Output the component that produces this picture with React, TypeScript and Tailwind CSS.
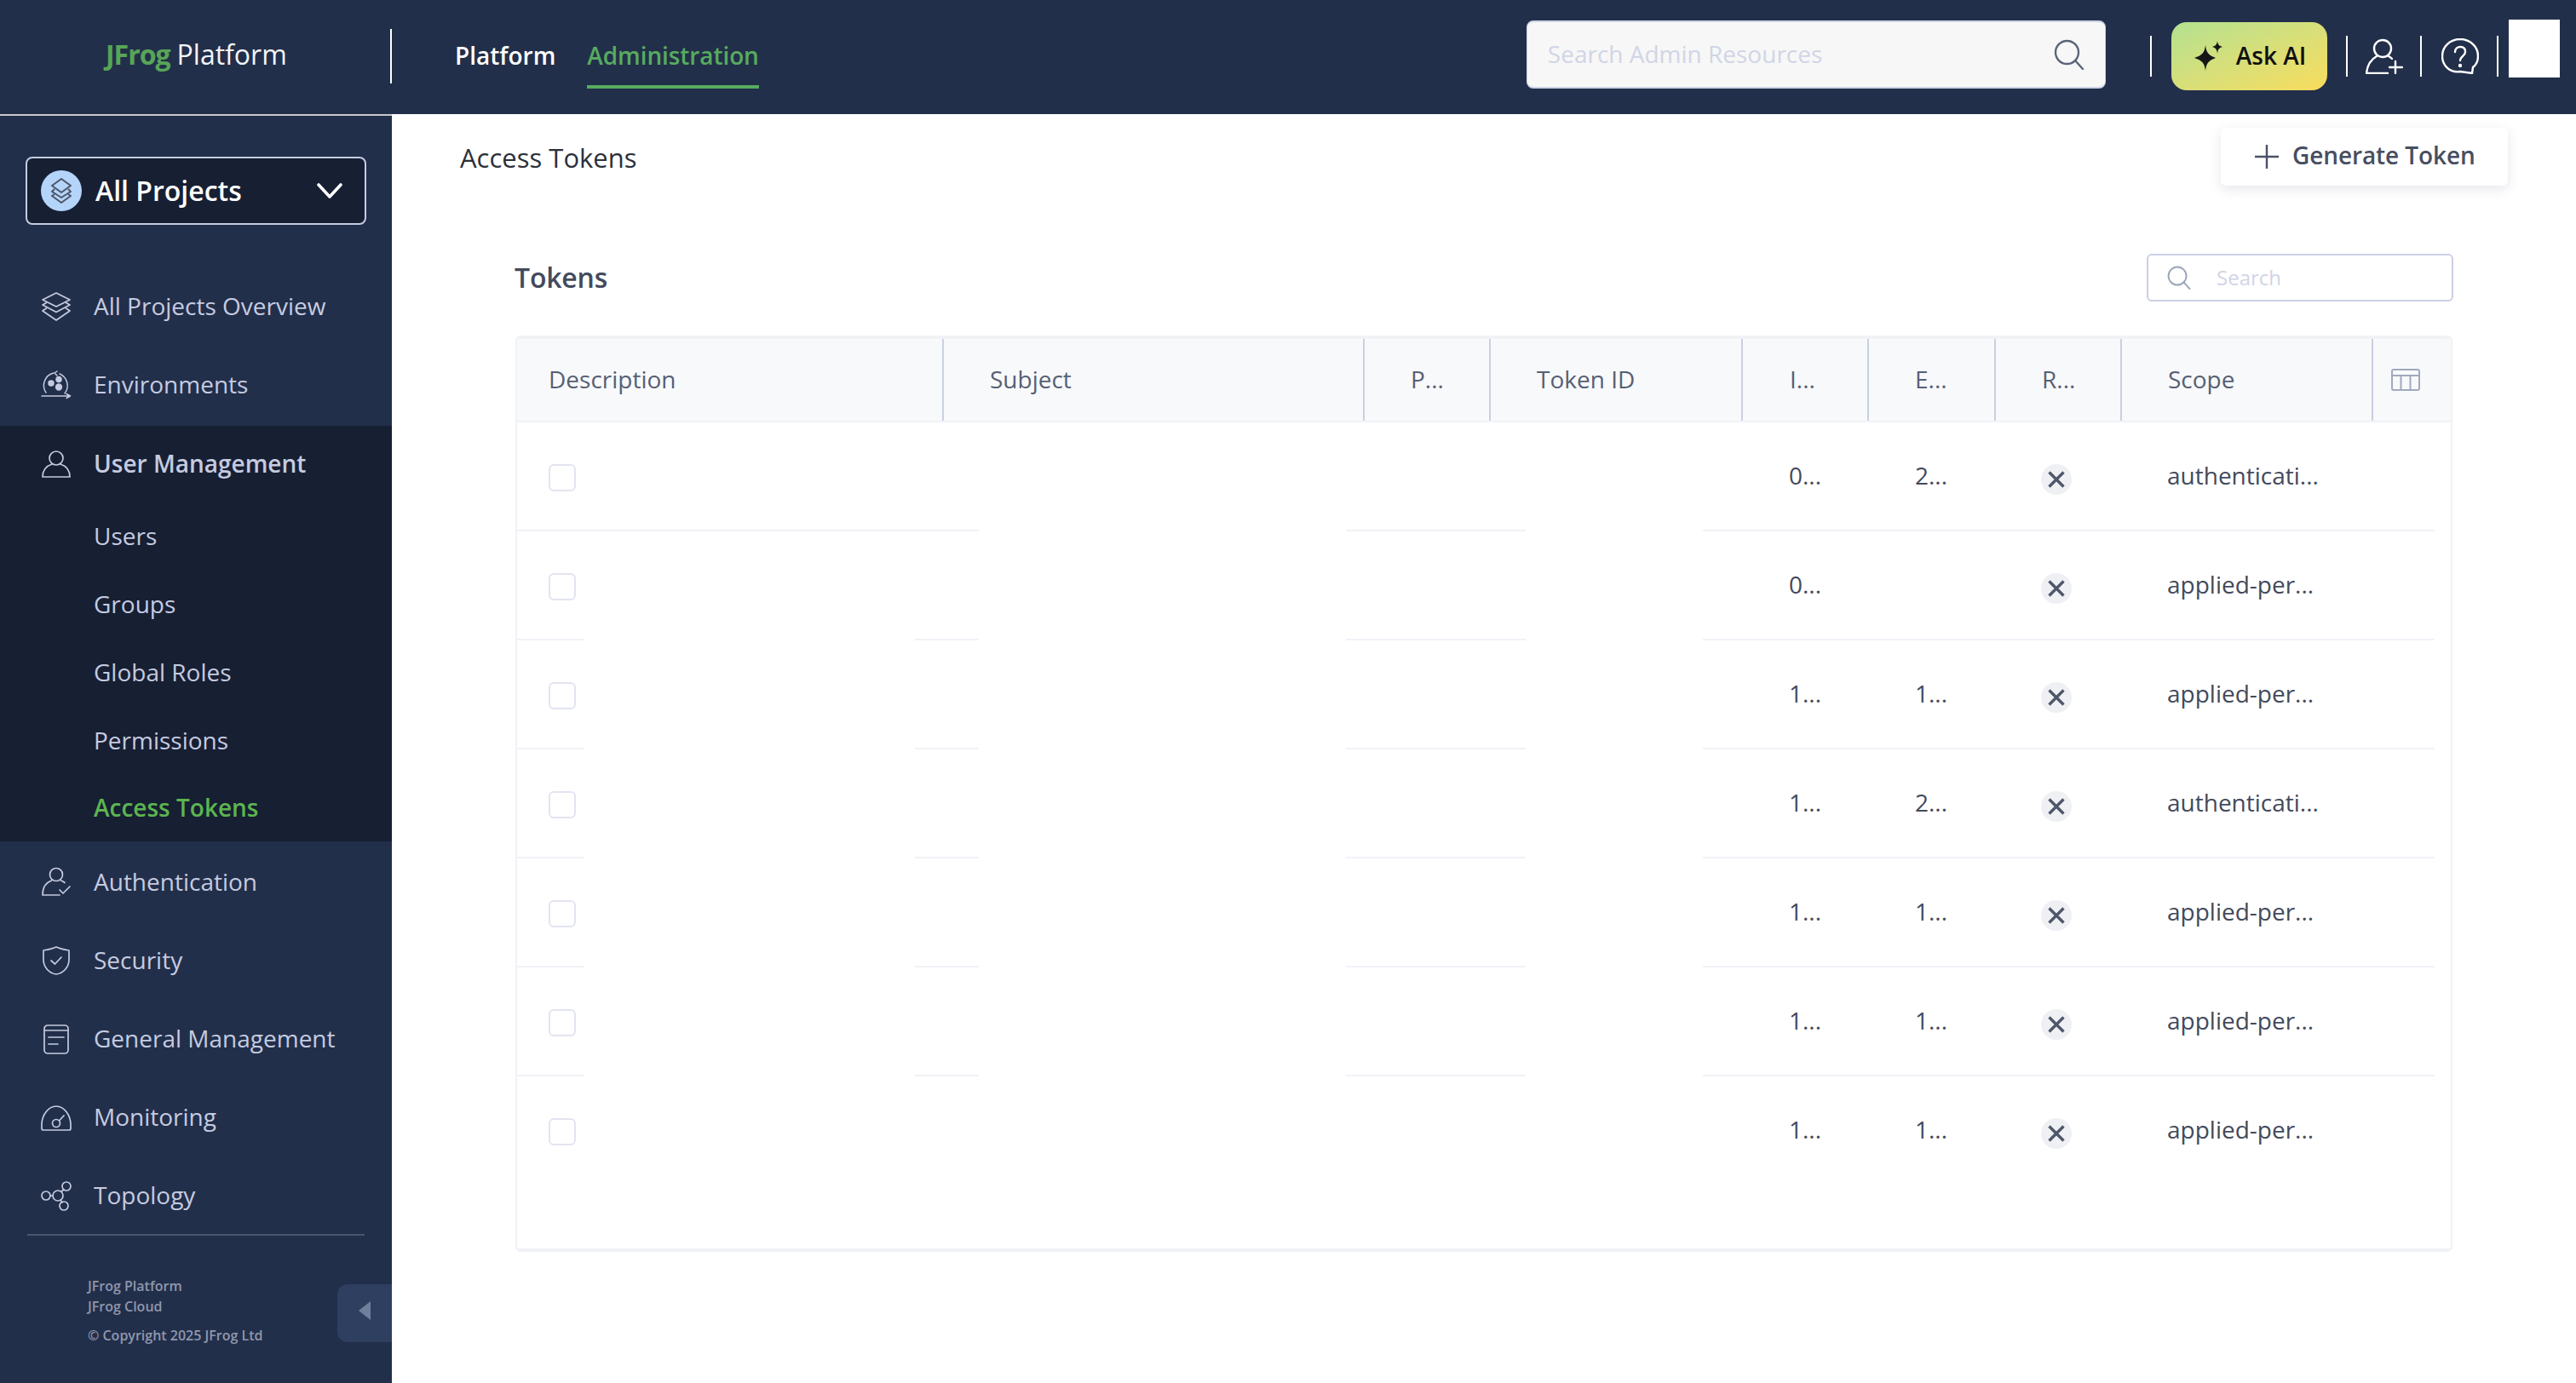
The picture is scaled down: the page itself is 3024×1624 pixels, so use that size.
import React from "react";

const s = { fill: "none", stroke: "currentColor", strokeWidth: 1.7, strokeLinecap: "round" as const, strokeLinejoin: "round" as const };

function StackIcon() {
  return (
    <svg width="36" height="36" viewBox="0 0 36 36" {...s}>
      <path d="M18 2 L34 10 L18 18 L2 10 Z" />
      <path d="M6.5 13.5 L2 16 L18 24.5 L34 16 L29.5 13.5" />
      <path d="M6.5 20 L2 23 L18 34 L34 23 L29.5 20" />
    </svg>
  );
}
function EnvIcon() {
  return (
    <svg width="36" height="36" viewBox="0 0 36 36" {...s} strokeWidth={1.5}>
      <path d="M22 5 A15 15 0 0 1 28 28" />
      <path d="M15 4 A15 15 0 0 0 6 27" />
      <path d="M19 2 L16 4 L19 7" />
      <path d="M1 31 H33 M30 28.5 L34.5 31 L30 33.5" />
      <circle cx="12" cy="16" r="3" fill="currentColor" />
      <circle cx="21" cy="11.5" r="3" fill="currentColor" />
      <circle cx="21" cy="20.5" r="3.4" fill="currentColor" />
    </svg>
  );
}
function UserIcon() {
  return (
    <svg width="36" height="36" viewBox="0 0 36 36" {...s}>
      <circle cx="18" cy="11" r="8" />
      <path d="M13 18 C7 20 2 25 2 33 H34 C34 25 29 20 23 18" />
    </svg>
  );
}
function UserCheckIcon() {
  return (
    <svg width="36" height="36" viewBox="0 0 36 36" {...s}>
      <circle cx="18" cy="9" r="7.5" />
      <path d="M12.5 16 C7 18 2 23 2 33 H22" />
      <path d="M23.5 16 C25.5 16.6 27 17.6 28 18.5" />
      <path d="M22 27 L26 31 L34 23" />
    </svg>
  );
}
function ShieldIcon() {
  return (
    <svg width="36" height="36" viewBox="0 0 36 36" {...s}>
      <path d="M18 2 C22 4 27 5 33 6 V17 C33 26 26 33 18 34 C10 33 3 26 3 17 V6 C9 5 14 4 18 2 Z" />
      <path d="M12 18 L16.5 22 L24 14" />
    </svg>
  );
}
function DocIcon() {
  return (
    <svg width="36" height="36" viewBox="0 0 36 36" {...s}>
      <rect x="4" y="2" width="28" height="33" rx="4" />
      <path d="M4 8 H32 M9 16 H27 M9 24 H20" />
    </svg>
  );
}
function GaugeIcon() {
  return (
    <svg width="36" height="36" viewBox="0 0 36 36" {...s}>
      <path d="M1 27 C1 15 9 5 18 5 C27 5 35 15 35 27 V31 Q35 33 33 33 H3 Q1 33 1 31 Z" />
      <circle cx="18" cy="25" r="4.5" />
      <path d="M21.5 22 L27 16" />
    </svg>
  );
}
function TopologyIcon() {
  return (
    <svg width="36" height="36" viewBox="0 0 36 36" {...s}>
      <circle cx="6" cy="18" r="5" />
      <circle cx="20" cy="18" r="6" />
      <circle cx="30" cy="7" r="5" />
      <circle cx="27" cy="30" r="5" />
      <path d="M11 18 H14 M24 13 L27 11 M23 23 L25 26" />
    </svg>
  );
}
function SearchGlass({ c, w, h }: { c: string; w: string; h: string }) {
  return (
    <svg className={`${c} ${w} ${h}`} viewBox="0 0 36 36" fill="none" stroke="currentColor" strokeWidth="2.4" strokeLinecap="round">
      <circle cx="15.5" cy="15.5" r="13.5" />
      <path d="M25 25 L34 35" />
    </svg>
  );
}

function NavItem({ icon, label, h = "h-[92px]", bold = false }: { icon: React.ReactNode; label: string; h?: string; bold?: boolean }) {
  return (
    <div className={`flex ${h} items-center pl-[48px] text-[28px] ${bold ? "font-semibold" : "font-normal"} text-[#c5cbe0]`}>
      <span className="flex w-[36px] items-center justify-center">{icon}</span>
      <span className="ml-[26px] -translate-y-[1px]">{label}</span>
    </div>
  );
}
function SubItem({ label, active = false, h = "h-[80px]" }: { label: string; active?: boolean; h?: string }) {
  return (
    <div className={`flex ${h} items-center pl-[110px] text-[28px] ${active ? "font-semibold text-[#5cb54f]" : "text-[#c5cbe0]"}`}>
      <span className="-translate-y-[1px]">{label}</span>
    </div>
  );
}

function HeadCell({ w, label, pl }: { w: string; label: string; pl: string }) {
  return (
    <div className={`flex h-full ${w} shrink-0 items-center border-r-2 border-[#c9d0e1] ${pl} text-[28px] text-[#566074]`}>
      <span className="-translate-y-[1px]">{label}</span>
    </div>
  );
}

const rows = [
  { i: "0...", e: "2...", scope: "authenticati..." },
  { i: "0...", e: "", scope: "applied-per..." },
  { i: "1...", e: "1...", scope: "applied-per..." },
  { i: "1...", e: "2...", scope: "authenticati..." },
  { i: "1...", e: "1...", scope: "applied-per..." },
  { i: "1...", e: "1...", scope: "applied-per..." },
  { i: "1...", e: "1...", scope: "applied-per..." },
];

function Row({ r }: { r: (typeof rows)[number] }) {
  return (
    <div className="flex h-[126px] items-center text-[28px] text-[#434a5c]">
      <div className="w-[493px] shrink-0 translate-y-[2px] pl-[37px]">
        <div className="h-[32px] w-[32px] rounded-[6px] border-2 border-[#e2e4f0] bg-white" />
      </div>
      <div className="w-[1000px] shrink-0" />
      <div className="w-[148px] shrink-0 -translate-y-[1px]">{r.i}</div>
      <div className="w-[149px] shrink-0 -translate-y-[1px]">{r.e}</div>
      <div className="flex w-[147px] shrink-0 translate-y-[4px] items-center">
        <span className="ml-[-1px] flex h-[36px] w-[36px] items-center justify-center rounded-full bg-[#eff0f3] text-[#4e576a]">
          <svg width="22" height="22" viewBox="0 0 22 22" fill="none" stroke="currentColor" strokeWidth="3.4">
            <path d="M2.5 2.5 L19.5 19.5 M19.5 2.5 L2.5 19.5" />
          </svg>
        </span>
      </div>
      <div className="-translate-y-[1px]">{r.scope}</div>
    </div>
  );
}

function Sep({ first }: { first: boolean }) {
  return (
    <div className="flex h-[2px] shrink-0">
      {first ? (
        <div className="w-[542px] bg-[#f1f2f6]" />
      ) : (
        <>
          <div className="w-[79px] bg-[#f1f2f6]" />
          <div className="ml-[388px] w-[75px] bg-[#f1f2f6]" />
        </>
      )}
      <div className="ml-[431px] w-[211px] bg-[#f1f2f6]" />
      <div className="ml-[208px] w-[859px] bg-[#f1f2f6]" />
    </div>
  );
}

export default function App() {
  return (
    <div
      className="flex h-[1624px] w-[3024px] flex-col overflow-hidden bg-white"
      style={{ fontFamily: '"Open Sans", "Noto Sans", sans-serif' }}
    >
      {/* top bar */}
      <header className="flex h-[134px] shrink-0 items-start bg-[#222f4a]">
        <div className="mt-[34px] flex h-[64px] w-[460px] shrink-0 items-center border-r-2 border-white pb-[4px] pl-[124px] text-[32px] leading-none">
          <span className="font-bold tracking-[-1px] text-[#57a557]">JFrog</span>
          <span className="ml-[8px] text-[#f2f4f8]">Platform</span>
        </div>
        <div className="ml-[74px] mt-[45px] text-[28px] leading-[40px] font-semibold text-white">Platform</div>
        <div className="ml-[37px] mt-[45px] h-[59px] border-b-4 border-[#57ab5f] text-[28px] leading-[40px] font-semibold tracking-[-0.1px] text-[#57ab5f]">
          Administration
        </div>
        <div className="ml-[901px] mt-[24px] flex h-[80px] w-[680px] shrink-0 items-center justify-between rounded-[8px] border-y-2 border-x border-[#cdd2e4] bg-[#f7f7f7] pl-[24px] pr-[24px]">
          <span className="-translate-y-[1px] text-[28px] text-[#d0d5e6]">Search Admin Resources</span>
          <SearchGlass c="text-[#5a6579]" w="w-[36px]" h="h-[36px]" />
        </div>
        <div className="ml-[52px] mt-[42px] h-[48px] w-[2px] shrink-0 bg-white" />
        <div className="ml-[23px] mt-[26px] flex h-[80px] w-[183px] shrink-0 items-center rounded-[18px] bg-gradient-to-br from-[#b3e190] to-[#f8dc5c] pl-[26px] text-[28px] font-semibold text-[#111]">
          <svg width="36" height="36" viewBox="0 0 36 36" fill="#161616">
            <path d="M14 5 C15 14 18 17 26 20 C18 23 15 26 14 35 C13 26 10 23 1 20 C10 17 13 14 14 5 Z" />
            <path d="M28 0 C28.5 4 30 6 34 7 C30 8 28.5 10 28 15 C27.5 10 26 8 22 7 C26 6 27.5 4 28 0 Z" />
          </svg>
          <span className="ml-[14px] -translate-y-[1px]">Ask AI</span>
        </div>
        <div className="ml-[22px] mt-[42px] h-[48px] w-[2px] shrink-0 bg-white" />
        <div className="ml-[21px] mt-[45px] shrink-0 text-white">
          <svg width="44" height="42" viewBox="0 0 44 42" fill="none" stroke="currentColor" strokeWidth="2.4" strokeLinecap="round">
            <circle cx="20" cy="12" r="10" />
            <path d="M13 21 C6 25 2 31 1 41 H26" />
            <path d="M27 21 C29 22 30 23 31 24" />
            <path d="M35 27 V41 M28 34 H43" />
          </svg>
        </div>
        <div className="ml-[20px] mt-[42px] h-[48px] w-[2px] shrink-0 bg-white" />
        <div className="ml-[23px] mt-[45px] shrink-0 text-white">
          <svg width="44" height="42" viewBox="0 0 44 42" fill="none" stroke="currentColor" strokeWidth="2.4" strokeLinecap="round" strokeLinejoin="round">
            <path d="M22 1 C10 1 1 10 1 21 C1 32 10 41 22 39 L36 41 L37 34 C41 31 43 26 43 21 C43 10 34 1 22 1 Z" />
            <path d="M16 16 C16 8 29 8 28 16 C28 21 22 21 22 26" />
            <circle cx="22" cy="32" r="1" fill="currentColor" />
          </svg>
        </div>
        <div className="ml-[21px] mt-[42px] h-[48px] w-[2px] shrink-0 bg-white" />
        <div className="ml-[12px] mt-[23px] h-[68px] w-[60px] shrink-0 bg-white" />
      </header>

      <div className="flex min-h-0 flex-1">
        {/* sidebar */}
        <aside className="flex w-[460px] shrink-0 flex-col border-t-2 border-[#c8c9cc] bg-[#222f4a]">
          <div className="mx-[30px] mt-[48px] flex h-[80px] shrink-0 items-center rounded-[8px] border-2 border-[#c5cbe0] bg-[#171f33] pl-[16px] pr-[26px]">
            <span className="flex h-[48px] w-[48px] items-center justify-center rounded-full bg-[#b5d4f9] text-[#4b5568]">
              <svg width="26" height="30" viewBox="0 0 26 30" fill="none" stroke="currentColor" strokeWidth="2" strokeLinejoin="round">
                <path d="M13 1 L24 9 L13 17 L2 9 Z" />
                <path d="M5 13 L2 16 L13 23 L24 16 L21 13" />
                <path d="M5 19 L2 21 L13 29 L24 21 L21 19" />
              </svg>
            </span>
            <span className="ml-[16px] flex-1 text-[32px] font-semibold text-white">All Projects</span>
            <svg width="30" height="18" viewBox="0 0 30 18" fill="none" stroke="#ffffff" strokeWidth="3.6" strokeLinecap="round" strokeLinejoin="round">
              <path d="M2 2 L15 16 L28 2" />
            </svg>
          </div>
          <div className="mt-[50px]">
            <NavItem icon={<StackIcon />} label="All Projects Overview" />
            <NavItem icon={<EnvIcon />} label="Environments" />
          </div>
          <div className="mt-[2px] bg-[#171f33]">
            <NavItem icon={<UserIcon />} label="User Management" h="h-[90px]" bold />
            <SubItem label="Users" />
            <SubItem label="Groups" />
            <SubItem label="Global Roles" />
            <SubItem label="Permissions" />
            <SubItem label="Access Tokens" active h="h-[78px]" />
          </div>
          <div className="mt-[2px]">
            <NavItem icon={<UserCheckIcon />} label="Authentication" />
            <NavItem icon={<ShieldIcon />} label="Security" />
            <NavItem icon={<DocIcon />} label="General Management" />
            <NavItem icon={<GaugeIcon />} label="Monitoring" />
            <NavItem icon={<TopologyIcon />} label="Topology" h="h-[91px]" />
          </div>
          <div className="mx-[32px] h-[2px] shrink-0 bg-[#4b556b]" />
          <div className="flex justify-between pl-[103px] pt-[47px] text-[16px] leading-[24px] font-semibold text-[#9097ae]">
            <div>
              <div>JFrog Platform</div>
              <div>JFrog Cloud</div>
              <div className="mt-[10px]">© Copyright 2025 JFrog Ltd</div>
            </div>
            <div className="mt-[10px] flex h-[68px] w-[64px] items-start rounded-l-[12px] bg-[#2f3f60] pl-[25px] pt-[20px]">
              <svg width="14" height="22" viewBox="0 0 14 22" fill="#6f7f9c"><path d="M14 0 V22 L0 11 Z" /></svg>
            </div>
          </div>
        </aside>

        {/* main */}
        <main className="flex min-w-0 flex-1 flex-col">
          <div className="flex items-start justify-between pl-[80px] pr-[80px] pt-[16px]">
            <h1 className="mt-[13px] text-[31px] leading-[44px] font-normal text-[#2c303a]">Access Tokens</h1>
            <button className="flex h-[68px] w-[337px] items-center rounded-[6px] bg-white pl-[38px] text-[28px] font-semibold tracking-[-0.1px] text-[#474e60] shadow-[0_4px_14px_rgba(40,50,80,0.12)]">
              <svg width="32" height="32" viewBox="0 0 32 32" fill="none" stroke="#4b5266" strokeWidth="2.4"><path d="M16 2 V30 M2 16 H30" /></svg>
              <span className="ml-[14px] -translate-y-[2px]">Generate Token</span>
            </button>
          </div>
          <div className="mt-[80px] flex h-[56px] items-center justify-between pl-[144px] pr-[144px]">
            <h2 className="text-[32px] font-semibold tracking-[-0.2px] text-[#434a5c]">Tokens</h2>
            <div className="flex h-[56px] w-[360px] items-center rounded-[6px] border-2 border-[#cbd0e3] bg-white pl-[22px]">
              <SearchGlass c="text-[#9aa3b8]" w="w-[28px]" h="h-[28px]" />
              <span className="ml-[30px] text-[24px] text-[#cfd4e5]">Search</span>
            </div>
          </div>
          <div className="ml-[145px] mt-[40px] flex h-[1076px] w-[2274px] flex-col rounded-[6px] border-x-2 border-y-4 border-[#f1f2f6]">
            <div className="flex h-[96px] shrink-0 items-stretch bg-[#f8f9fb]">
              <HeadCell w="w-[501px]" label="Description" pl="pl-[37px]" />
              <HeadCell w="w-[494px]" label="Subject" pl="pl-[54px]" />
              <HeadCell w="w-[148px]" label="P..." pl="pl-[54px]" />
              <HeadCell w="w-[296px]" label="Token ID" pl="pl-[54px]" />
              <HeadCell w="w-[148px]" label="I..." pl="pl-[55px]" />
              <HeadCell w="w-[149px]" label="E..." pl="pl-[54px]" />
              <HeadCell w="w-[148px]" label="R..." pl="pl-[54px]" />
              <HeadCell w="w-[295px]" label="Scope" pl="pl-[54px]" />
              <div className="flex flex-1 items-center pl-[21px] text-[#a2a9bf]">
                <svg width="34" height="26" viewBox="0 0 34 26" fill="none" stroke="currentColor" strokeWidth="2">
                  <rect x="1" y="1" width="32" height="24" rx="2" />
                  <path d="M1 8 H33 M11.5 8 V25 M22.5 8 V25" />
                </svg>
              </div>
            </div>
            <div className="h-[2px] shrink-0 bg-[#f1f2f6]" />
            {rows.map((r, i) => (
              <React.Fragment key={i}>
                <Row r={r} />
                {i < 6 && <Sep first={i === 0} />}
              </React.Fragment>
            ))}
          </div>
        </main>
      </div>
    </div>
  );
}
